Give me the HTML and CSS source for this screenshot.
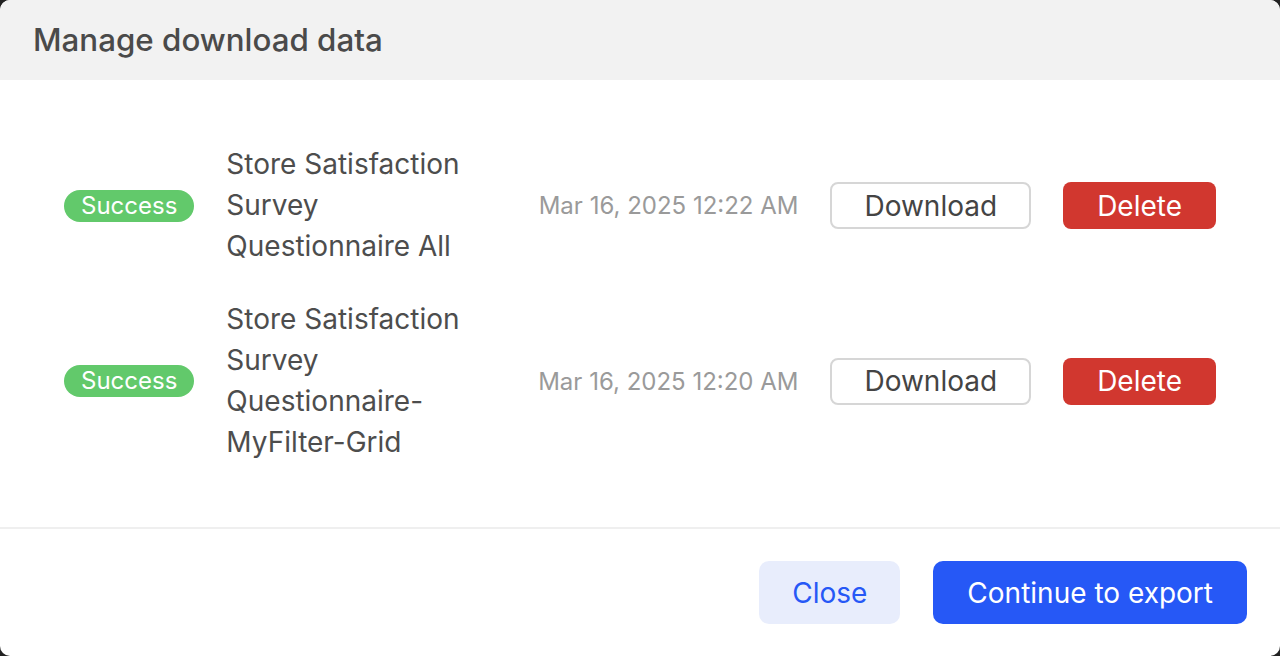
FILE: index.html
```html
<!DOCTYPE html>
<html lang="en">
<head>
<meta charset="utf-8">
<title>Manage download data</title>
<link rel="stylesheet" href="styles.css">
</head>
<body>
<div class="modal">
  <header class="modal-header">
    <h1 class="modal-title">Manage download data</h1>
  </header>
  <main class="modal-body">
    <div class="row">
      <span class="badge">Success</span>
      <div class="name">Store Satisfaction Survey Questionnaire All</div>
      <div class="date">Mar 16, 2025 12:22 AM</div>
      <button class="btn btn-outline">Download</button>
      <button class="btn btn-danger">Delete</button>
    </div>
    <div class="row">
      <span class="badge">Success</span>
      <div class="name">Store Satisfaction Survey Questionnaire-MyFilter-Grid</div>
      <div class="date">Mar 16, 2025 12:20 AM</div>
      <button class="btn btn-outline">Download</button>
      <button class="btn btn-danger">Delete</button>
    </div>
  </main>
  <footer class="modal-footer">
    <button class="btn btn-soft">Close</button>
    <button class="btn btn-primary">Continue to export</button>
  </footer>
</div>
</body>
</html>
```

FILE: styles.css
```css
* { box-sizing: border-box; }
html, body { margin: 0; padding: 0; }
body {
  width: 1280px;
  height: 656px;
  background: #222222;
  font-family: Inter, "Noto Sans", "Liberation Sans", sans-serif;
  overflow: hidden;
}
.modal {
  width: 1280px;
  height: 656px;
  background: #ffffff;
  border-radius: 10px;
  overflow: hidden;
  display: flex;
  flex-direction: column;
}
.modal-header {
  height: 80px;
  background: #f2f2f2;
  display: flex;
  align-items: center;
  padding-left: 33px;
}
.modal-title {
  margin: 0;
  font-size: 31.3px;
  font-weight: 500;
  color: #4a4a4a;
}
.modal-body {
  flex: 1;
  padding: 64px 64px;
  display: flex;
  flex-direction: column;
  gap: 32px;
  border-bottom: 2px solid #efefef;
}
.row {
  display: grid;
  grid-template-columns: auto 1fr auto auto auto;
  column-gap: 32px;
  align-items: center;
}
.badge {
  display: inline-block;
  height: 32px;
  line-height: 32px;
  padding: 0 17px;
  border-radius: 16px;
  background: #62c96b;
  color: #ffffff;
  font-size: 24px;
}
.name {
  font-size: 28px;
  line-height: 41px;
  color: #4d4d4d;
}
.date {
  font-size: 24px;
  color: #9a9a9a;
}
.btn {
  font-family: inherit;
  font-size: 28px;
  border: none;
  cursor: pointer;
  padding: 0 34px;
}
.btn-outline {
  height: 47px;
  padding: 0 32px;
  background: #ffffff;
  border: 2px solid #d6d6d6;
  border-radius: 8px;
  color: #444444;
}
.btn-danger {
  height: 47px;
  background: #d1372f;
  border-radius: 8px;
  color: #ffffff;
}
.modal-footer {
  height: 127px;
  display: flex;
  justify-content: flex-end;
  align-items: center;
  gap: 33px;
  padding-right: 33px;
}
.btn-soft {
  height: 63px;
  padding: 0 33px;
  border-radius: 10px;
  background: #e8edfc;
  color: #2658f6;
}
.btn-primary {
  height: 63px;
  border-radius: 10px;
  background: #2658f6;
  color: #ffffff;
}
```
